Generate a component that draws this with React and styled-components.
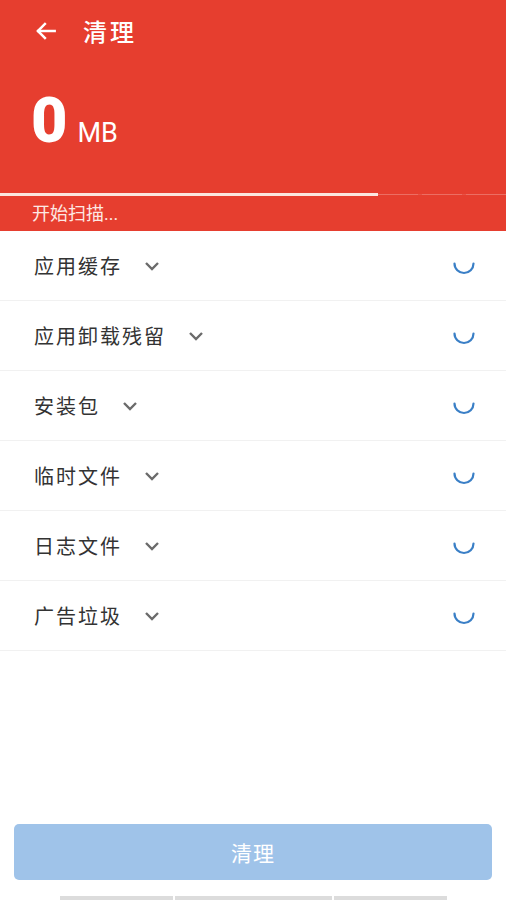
import React from "react";
import styled, { createGlobalStyle } from "styled-components";

const GlobalStyle = createGlobalStyle`
    html, body {
        margin: 0;
        padding: 0;
        background: #fff;
    }
    body {
        font-family: Roboto, "Noto Sans CJK SC", sans-serif;
    }
`;

const Page = styled.div`
    height: 900px;
    display: flex;
    flex-direction: column;
    background: #fff;
    overflow: hidden;
`;

const Header = styled.div`
    background-color: #e63e2f;
    color: #fff;
    display: flex;
    flex-direction: column;
    height: 231px;
`;

const TopBar = styled.div`
    display: flex;
    align-items: center;
    height: 61px;
    padding: 0 0 5px 33px;
    gap: 24px;
`;

const Title = styled.div`
    font-size: 24px;
    font-weight: 500;
    letter-spacing: 3px;
`;

const SizeRow = styled.div`
    display: flex;
    align-items: baseline;
    padding-left: 31px;
    margin-top: 23px;
    height: 68px;
`;

const SizeValue = styled.span`
    font-size: 63px;
    font-weight: 900;
    line-height: 1;
`;

const SizeUnit = styled.span`
    font-size: 27px;
    margin-left: 10px;
`;

const Progress = styled.div`
    display: flex;
    height: 3px;
    margin-top: 36px;
`;

const ProgressDone = styled.div`
    background: #fbe6df;
    height: 100%;
`;

const ProgressRest = styled.div`
    flex: 1;
    height: 1px;
    margin-top: 1px;
    background: repeating-linear-gradient(
        90deg,
        rgba(255, 255, 255, 0.25) 0 40px,
        rgba(255, 255, 255, 0.1) 40px 44px
    );
`;

const Status = styled.div`
    font-size: 18px;
    line-height: 24px;
    color: #fde8e3;
    padding-left: 32px;
    margin-top: 6px;
`;

const List = styled.div`
    display: flex;
    flex-direction: column;
`;

const Row = styled.div`
    height: 69px;
    border-bottom: 1px solid #f1f1f1;
    display: flex;
    align-items: center;
    padding: 0 30px 0 34px;
`;

const Label = styled.span`
    font-size: 20px;
    color: #333;
    letter-spacing: 2px;
`;

const Chevron = styled.svg`
    margin-left: 22px;
    margin-top: 1px;
`;

const Spinner = styled.svg`
    margin-left: auto;
`;

const Spacer = styled.div`
    flex: 1;
`;

const CleanButton = styled.button`
    margin: 0 14px;
    height: 56px;
    border: none;
    border-radius: 5px;
    background: #9fc3e9;
    color: #fff;
    font-size: 21px;
    font-family: Roboto, "Noto Sans CJK SC", sans-serif;
    letter-spacing: 1px;
`;

const BottomStrip = styled.div`
    display: flex;
    justify-content: center;
    gap: 2px;
    margin-top: 16px;
    height: 4px;
`;

const StripPart = styled.div`
    width: ${(p) => p.$w}px;
    background: #dcdcdc;
`;

const items = ["应用缓存", "应用卸载残留", "安装包", "临时文件", "日志文件", "广告垃圾"];

const App = () => {
    return (
        <Page>
            <GlobalStyle />
            <Header>
                <TopBar>
                    <svg width="26" height="26" viewBox="0 0 24 24" fill="none" stroke="#fff" strokeWidth="2.3" strokeLinecap="square">
                        <path d="M20 12H5" />
                        <path d="M11 5.5L4.5 12l6.5 6.5" />
                    </svg>
                    <Title>清理</Title>
                </TopBar>
                <SizeRow>
                    <SizeValue>0</SizeValue>
                    <SizeUnit>MB</SizeUnit>
                </SizeRow>
                <Progress>
                    <ProgressDone style={{ width: "378px" }} />
                    <ProgressRest />
                </Progress>
                <Status>开始扫描...</Status>
            </Header>
            <List>
                {items.map((item) => (
                    <Row key={item}>
                        <Label>{item}</Label>
                        <Chevron width="16" height="10" viewBox="0 0 16 10" fill="none" stroke="#6b6b6b" strokeWidth="2.4">
                            <path d="M2 2l6 6 6-6" />
                        </Chevron>
                        <Spinner width="24" height="24" viewBox="0 0 24 24" fill="none" stroke="#3a7fc6" strokeWidth="2.2" strokeLinecap="round">
                            <path d="M2.5 9.5A9.5 9.5 0 0 0 21.5 9.5" />
                        </Spinner>
                    </Row>
                ))}
            </List>
            <Spacer />
            <CleanButton>清理</CleanButton>
            <BottomStrip>
                <StripPart $w={113} />
                <StripPart $w={157} />
                <StripPart $w={113} />
            </BottomStrip>
        </Page>
    );
};

export default App;
